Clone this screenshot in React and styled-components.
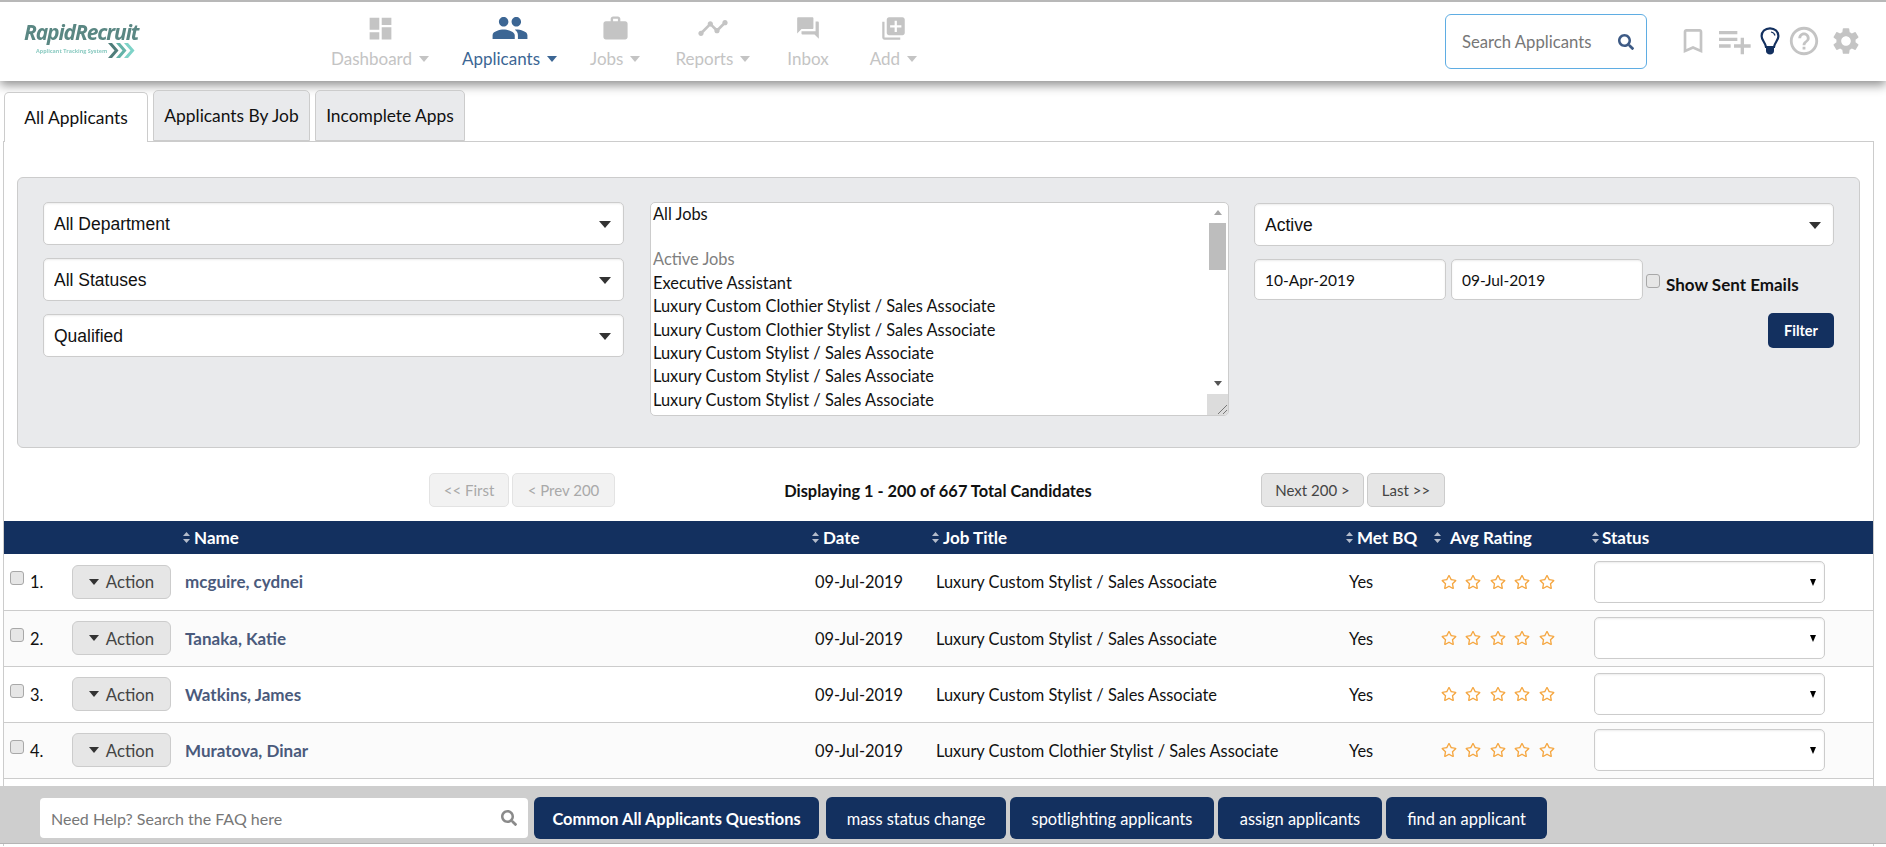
import styled, { createGlobalStyle } from 'styled-components';
import {
  MdDashboard, MdPeople, MdWork, MdTimeline, MdQuestionAnswer, MdLibraryAdd,
  MdBookmarkBorder, MdPlaylistAdd, MdHelpOutline, MdSettings,
} from 'react-icons/md';
import { FaSearch, FaRegStar } from 'react-icons/fa';

const navy = '#13305f';
const textFont = `Lato, "Noto Sans", sans-serif`;

const GlobalStyle = createGlobalStyle`
  html, body {
    margin: 0;
    height: 847px;
    overflow: hidden;
    background: #fff;
    font-family: ${textFont};
    font-size: 16.4px;
    color: #111;
  }
  * { box-sizing: border-box; }
`;

const TopBar = styled.header`
  height: 81px;
  border-top: 2px solid #b8b8b8;
  background: #fff;
  box-shadow: 0 4px 10px rgba(0, 0, 0, 0.45);
  display: flex;
  align-items: flex-start;
  position: relative;
`;

const Logo = styled.div`
  width: 331px;
  padding: 18px 0 0 24px;
  filter: blur(0.5px);
`;

const LogoName = styled.div`
  font: italic 700 21px/24px "Open Sans", sans-serif;
  letter-spacing: -1.1px;
  color: #5a8783;
`;

const LogoRow = styled.div`
  display: flex;
  align-items: center;
  margin: -2px 0 0 12px;
`;

const LogoSub = styled.span`
  font: 700 5.4px/10px "Open Sans", sans-serif;
  color: #8ccbc2;
  white-space: nowrap;
`;

const Nav = styled.nav`
  display: flex;
  gap: 33px;
  width: 1114px;
`;

const NavItem = styled.div`
  display: flex;
  flex-direction: column;
  align-items: center;
  margin-left: ${p => p.$shift || 0}px;
  color: ${p => (p.$active ? '#3c6694' : '#c4c4c4')};
  font-size: 17px;
`;

const NavIcon = styled.div`
  height: 38px;
  padding-top: 14px;
  display: flex;
  align-items: center;
  justify-content: center;
  font-size: ${p => p.$size}px;
`;

const NavLabel = styled.div`
  display: flex;
  align-items: center;
  gap: 7px;
  line-height: 20px;
  margin-top: 9px;
  white-space: nowrap;
`;

const Caret = styled.span`
  display: inline-block;
  width: 0;
  height: 0;
  border-left: 5px solid transparent;
  border-right: 5px solid transparent;
  border-top: 6px solid ${p => p.$color || 'currentColor'};
`;

const SearchBox = styled.div`
  width: 202px;
  height: 55px;
  margin-top: 12px;
  border: 1px solid #5fade3;
  border-radius: 6px;
  padding: 0 12px 0 16px;
  display: flex;
  align-items: center;
  justify-content: space-between;
  color: #777;
  font-size: 16.7px;
  svg { color: #3d5a85; font-size: 16px; }
`;

const ToolIcons = styled.div`
  display: flex;
  align-items: center;
  height: 30px;
  margin: 24px 0 0 30px;
  color: #c4c4c4;
`;

const ToolIcon = styled.span`
  display: flex;
  font-size: ${p => p.$size}px;
  margin-right: ${p => p.$gap || 0}px;
`;

const Tabs = styled.div`
  display: flex;
  align-items: flex-end;
  gap: 5px;
  height: 60px;
  padding-left: 4px;
  position: relative;
`;

const Tab = styled.div`
  width: ${p => p.$w}px;
  height: ${p => (p.$active ? 50 : 51)}px;
  border: 1px solid #ccc;
  border-bottom: ${p => (p.$active ? '0' : '1px solid #ccc')};
  border-radius: 5px 5px 0 0;
  background: ${p => (p.$active ? '#fff' : '#e9eaec')};
  font-size: 17.4px;
  white-space: nowrap;
  display: flex;
  align-items: center;
  justify-content: center;
  margin-bottom: ${p => (p.$active ? -1 : 0)}px;
  position: relative;
`;

const Content = styled.main`
  width: 1871px;
  height: 705px;
  margin-left: 3px;
  border-left: 1px solid #ccc;
  border-right: 1px solid #ccc;
  border-top: 1px solid #ccc;
  padding-top: 35px;
`;

const FilterPanel = styled.section`
  height: 271px;
  margin: 0 13px;
  border: 1px solid #ccc;
  border-radius: 6px;
  background: #e9eaec;
  padding: 24px 25px 0 25px;
  display: grid;
  grid-template-columns: 581px 580px 580px;
  column-gap: 25px;
`;

const Stack = styled.div`
  display: flex;
  flex-direction: column;
  gap: 13px;
  margin-top: ${p => p.$offset || 0}px;
`;

const SelectWrap = styled.div`
  position: relative;
  width: ${p => (p.$small ? '231px' : 'auto')};
  &::after {
    content: '';
    position: absolute;
    right: ${p => (p.$small ? 9 : 13)}px;
    top: 50%;
    margin-top: -3px;
    border-left: ${p => (p.$small ? 3 : 6)}px solid transparent;
    border-right: ${p => (p.$small ? 3 : 6)}px solid transparent;
    border-top: 7px solid ${p => (p.$small ? '#000' : '#333')};
    pointer-events: none;
  }
`;

const Select = styled.select`
  appearance: none;
  display: block;
  width: 100%;
  height: ${p => (p.$small ? 42 : 43)}px;
  padding: 0 10px;
  background: #fff;
  border: 1px solid #ccc;
  border-radius: 5px;
  box-shadow: inset 0 1px 2px rgba(0, 0, 0, 0.08);
  font: 17.5px "Liberation Sans", Arial, sans-serif;
  color: #111;
`;

const ListBox = styled.div`
  height: 214px;
  margin-left: 1px;
  border: 1px solid #ccc;
  border-radius: 5px;
  background: #fff;
  display: flex;
  overflow: hidden;
`;

const ListItems = styled.div`
  flex: 1;
  margin-top: -1px;
  padding-left: 2px;
`;

const ListItem = styled.div`
  height: ${p => (p.$blank ? 22 : 23.4)}px;
  line-height: 23px;
  white-space: nowrap;
  color: ${p => (p.$group ? '#808080' : '#111')};
`;

const ScrollBar = styled.div`
  width: 21px;
  display: flex;
  flex-direction: column;
  align-items: center;
  padding-top: 7px;
`;

const ScrollArrow = styled.span`
  width: 0;
  height: 0;
  border-left: 4px solid transparent;
  border-right: 4px solid transparent;
  border-${p => (p.$up ? 'bottom' : 'top')}: 5px solid ${p => (p.$up ? '#a6a6a6' : '#555')};
`;

const ScrollThumb = styled.div`
  width: 17px;
  height: 47px;
  margin-top: 8px;
  background: #bdbdbd;
`;

const ScrollGap = styled.div`
  flex: 1;
`;

const ResizeCorner = styled.div`
  width: 21px;
  height: 21px;
  margin-top: 8px;
  background: #dcdcdc;
  display: flex;
  align-items: flex-end;
  justify-content: flex-end;
`;

const DateRow = styled.div`
  display: flex;
  align-items: flex-start;
`;

const DateInput = styled.input`
  width: 192px;
  height: 41px;
  margin-right: 5px;
  padding: 0 10px;
  border: 1px solid #ccc;
  border-radius: 5px;
  background: #fff;
  box-shadow: inset 0 1px 2px rgba(0, 0, 0, 0.08);
  font: 15.5px ${textFont};
  color: #111;
`;

const Check = styled.input.attrs({ type: 'checkbox', readOnly: true })`
  appearance: none;
  width: 14px;
  height: 14px;
  margin: 0;
  flex: none;
  border: 1px solid #a8a8a8;
  border-radius: 3px;
  background: #e6e6e6;
`;

const SentLabel = styled.label`
  display: flex;
  align-items: flex-start;
  gap: 6px;
  margin: 15px 0 0 -2px;
  font-weight: 700;
  font-size: 17px;
  line-height: 21px;
  white-space: nowrap;
`;

const FilterButton = styled.button`
  align-self: flex-end;
  width: 66px;
  height: 35px;
  background: ${navy};
  color: #fff;
  border: 0;
  border-radius: 5px;
  font: 700 14.5px ${textFont};
`;

const Pager = styled.div`
  display: flex;
  align-items: center;
  height: 34px;
  margin: 25px 0 14px 425px;
`;

const PagerGroup = styled.div`
  display: flex;
  gap: 3px;
`;

const PagerText = styled.div`
  width: 646px;
  text-align: center;
  font-weight: 700;
`;

const PagerButton = styled.div`
  width: ${p => p.$w}px;
  height: 34px;
  border: 1px solid ${p => (p.$off ? '#e3e3e3' : '#ccc')};
  border-radius: 5px;
  background: ${p => (p.$off ? '#f2f2f2' : '#e6e6e6')};
  color: ${p => (p.$off ? '#a9a9a9' : '#444')};
  font-size: 15px;
  display: flex;
  align-items: center;
  justify-content: center;
`;

const Table = styled.table`
  width: 1869px;
  border-collapse: collapse;
  table-layout: fixed;
`;

const HeadRow = styled.tr`
  height: 33px;
  background: ${navy};
  color: #fff;
`;

const Th = styled.th`
  padding: 0;
  text-align: left;
  font-size: 17px;
  font-weight: 700;
`;

const HeadInner = styled.div`
  display: flex;
  align-items: center;
  gap: ${p => p.$gap || 4}px;
  white-space: nowrap;
`;

const Row = styled.tr`
  height: 56px;
  border-bottom: 1px solid #ccc;
  background: ${p => (p.$alt ? '#fbfbfb' : '#fff')};
`;

const Td = styled.td`
  padding: 0 0 0 ${p => p.$pad || 3}px;
  white-space: nowrap;
`;

const RowStart = styled.div`
  display: flex;
  align-items: center;
  padding-left: 3px;
`;

const RowCheck = styled(Check)`
  margin-bottom: 7px;
`;

const RowNumber = styled.span`
  width: 48px;
  padding-left: 6px;
`;

const ActionButton = styled.div`
  width: 99px;
  height: 34px;
  border: 1px solid #ccc;
  border-radius: 6px;
  background: #e6e6e6;
  color: #444;
  font-size: 16.8px;
  display: flex;
  align-items: center;
  justify-content: center;
  gap: 7px;
`;

const NameLink = styled.span`
  font-weight: 700;
  font-size: 17px;
  color: #4a5a7c;
`;

const Stars = styled.div`
  display: flex;
  gap: 8.4px;
  font-size: 16px;
  color: #f5a742;
`;

const HelpBar = styled.footer`
  position: fixed;
  left: 0;
  right: 0;
  bottom: 3px;
  height: 58px;
  background: #cecece;
  border-bottom: 1px solid #b5b5b5;
  padding: 11px 0 0 40px;
  display: flex;
  gap: 6px;
`;

const HelpSearch = styled.div`
  width: 488px;
  height: 40px;
  margin-top: 1px;
  background: #fff;
  border-radius: 4px;
  padding: 0 11px;
  display: flex;
  align-items: center;
  justify-content: space-between;
  color: #777;
  font-size: 16px;
  svg { color: #8a8a8a; font-size: 16px; }
`;

const HelpButtons = styled.div`
  display: flex;
  gap: 4px;
`;

const HelpButton = styled.div`
  width: ${p => p.$w}px;
  height: 42px;
  background: ${navy};
  border-radius: 6px;
  color: #fff;
  font-size: 16.4px;
  font-weight: ${p => (p.$bold ? 700 : 400)};
  white-space: nowrap;
  display: flex;
  align-items: center;
  justify-content: center;
  &:first-child { margin-right: 3px; }
`;

const navItems = [
  { label: 'Dashboard', Icon: MdDashboard, size: 29, caret: true },
  { label: 'Applicants', Icon: MdPeople, size: 38, caret: true, active: true },
  { label: 'Jobs', Icon: MdWork, size: 29, caret: true },
  { label: 'Reports', Icon: MdTimeline, size: 32, caret: true, shift: 2 },
  { label: 'Inbox', Icon: MdQuestionAnswer, size: 26, shift: 4 },
  { label: 'Add', Icon: MdLibraryAdd, size: 27, caret: true, shift: 8 },
];

const jobOptions = [
  { text: 'All Jobs' },
  { text: '\u00a0', blank: true },
  { text: 'Active Jobs', group: true },
  { text: 'Executive Assistant' },
  { text: 'Luxury Custom Clothier Stylist / Sales Associate' },
  { text: 'Luxury Custom Clothier Stylist / Sales Associate' },
  { text: 'Luxury Custom Stylist / Sales Associate' },
  { text: 'Luxury Custom Stylist / Sales Associate' },
  { text: 'Luxury Custom Stylist / Sales Associate' },
];

const columns = [179, 629, 120, 414, 88, 158, 281];

const headers = [
  { label: '' },
  { label: 'Name' },
  { label: 'Date' },
  { label: 'Job Title' },
  { label: 'Met BQ' },
  { label: 'Avg Rating', gap: 9 },
  { label: 'Status', gap: 3 },
];

const applicants = [
  { name: 'mcguire, cydnei', job: 'Luxury Custom Stylist / Sales Associate' },
  { name: 'Tanaka, Katie', job: 'Luxury Custom Stylist / Sales Associate' },
  { name: 'Watkins, James', job: 'Luxury Custom Stylist / Sales Associate' },
  { name: 'Muratova, Dinar', job: 'Luxury Custom Clothier Stylist / Sales Associate' },
];

const helpLinks = [
  { text: 'Common All Applicants Questions', w: 285, bold: true },
  { text: 'mass status change', w: 180 },
  { text: 'spotlighting applicants', w: 204 },
  { text: 'assign applicants', w: 164 },
  { text: 'find an applicant', w: 161 },
];

function SortIcon() {
  return (
    <svg width="7" height="11" viewBox="0 0 7 11">
      <path d="M3.5 0 7 4H0z M3.5 11 0 7h7z" fill="#b4bccb" />
    </svg>
  );
}

function Bulb() {
  return (
    <svg width="20" height="28" viewBox="0 0 20 28">
      <path d="M10 1.3C5 1.3 1.6 4.8 1.6 9c0 4.5 3.6 6 4.4 11h8c.8-5 4.4-6.5 4.4-11 0-4.2-3.4-7.7-8.4-7.7z" fill="none" stroke={navy} strokeWidth="2.2" />
      <path d="M6 19.5h8V24c0 2-1.8 3.5-4 3.5S6 26 6 24z" fill={navy} />
      <path d="M11 5c2 .3 3.5 1.5 4 3.5" fill="none" stroke={navy} strokeWidth="1.2" />
    </svg>
  );
}

function Chevrons() {
  return (
    <svg width="28" height="17" viewBox="0 0 28 17">
      <path d="M1 1l6.5 7.5L1 16h4l6.5-7.5L5 1z" fill="#4f7d7a" />
      <path d="M9 1l6.5 7.5L9 16h4l6.5-7.5L13 1z" fill="#64b3a8" />
      <path d="M17 1l6.5 7.5L17 16h4l6.5-7.5L21 1z" fill="#7ed3c8" />
    </svg>
  );
}

function Header() {
  return (
    <TopBar>
      <Logo>
        <LogoName>RapidRecruit</LogoName>
        <LogoRow>
          <LogoSub>Applicant Tracking System</LogoSub>
          <Chevrons />
        </LogoRow>
      </Logo>
      <Nav>
        {navItems.map(({ label, Icon, size, caret, active, shift }) => (
          <NavItem key={label} $active={active} $shift={shift}>
            <NavIcon $size={size}><Icon /></NavIcon>
            <NavLabel>
              {label}
              {caret && <Caret />}
            </NavLabel>
          </NavItem>
        ))}
      </Nav>
      <SearchBox>
        Search Applicants
        <FaSearch />
      </SearchBox>
      <ToolIcons>
        <ToolIcon $size={32} $gap={5}><MdBookmarkBorder /></ToolIcon>
        <ToolIcon $size={40} $gap={6}><MdPlaylistAdd /></ToolIcon>
        <ToolIcon $size={28} $gap={7}><Bulb /></ToolIcon>
        <ToolIcon $size={34} $gap={9}><MdHelpOutline /></ToolIcon>
        <ToolIcon $size={32}><MdSettings /></ToolIcon>
      </ToolIcons>
    </TopBar>
  );
}

function Filters() {
  return (
    <FilterPanel>
      <Stack>
        {['All Department', 'All Statuses', 'Qualified'].map(value => (
          <SelectWrap key={value}>
            <Select defaultValue={value}><option>{value}</option></Select>
          </SelectWrap>
        ))}
      </Stack>
      <ListBox>
        <ListItems>
          {jobOptions.map((option, i) => (
            <ListItem key={i} $group={option.group} $blank={option.blank}>{option.text}</ListItem>
          ))}
        </ListItems>
        <ScrollBar>
          <ScrollArrow $up />
          <ScrollThumb />
          <ScrollGap />
          <ScrollArrow />
          <ResizeCorner>
            <svg width="11" height="11" viewBox="0 0 11 11">
              <path d="M1 10l9-9M6 10l4-4" stroke="#777" strokeWidth="1" />
            </svg>
          </ResizeCorner>
        </ScrollBar>
      </ListBox>
      <Stack $offset={1}>
        <SelectWrap>
          <Select defaultValue="Active"><option>Active</option></Select>
        </SelectWrap>
        <DateRow>
          <DateInput defaultValue="10-Apr-2019" />
          <DateInput defaultValue="09-Jul-2019" />
          <SentLabel>
            <Check />
            <span>Show Sent Emails</span>
          </SentLabel>
        </DateRow>
        <FilterButton>Filter</FilterButton>
      </Stack>
    </FilterPanel>
  );
}

function ApplicantTable() {
  return (
    <Table>
      <colgroup>
        {columns.map((w, i) => <col key={i} width={w} />)}
      </colgroup>
      <thead>
        <HeadRow>
          {headers.map(h => (
            <Th key={h.label}>
              {h.label && (
                <HeadInner $gap={h.gap}>
                  <SortIcon />
                  {h.label}
                </HeadInner>
              )}
            </Th>
          ))}
        </HeadRow>
      </thead>
      <tbody>
        {applicants.map((a, i) => (
          <Row key={a.name} $alt={i % 2 === 1}>
            <Td>
              <RowStart>
                <RowCheck />
                <RowNumber>{i + 1}.</RowNumber>
                <ActionButton><Caret $color="#333" />Action</ActionButton>
              </RowStart>
            </Td>
            <Td $pad={2}><NameLink>{a.name}</NameLink></Td>
            <Td>09-Jul-2019</Td>
            <Td $pad={4}>{a.job}</Td>
            <Td>Yes</Td>
            <Td $pad={7}>
              <Stars>
                {[1, 2, 3, 4, 5].map(n => <FaRegStar key={n} />)}
              </Stars>
            </Td>
            <Td $pad={2}>
              <SelectWrap $small>
                <Select $small defaultValue="" aria-label="Status"><option value="" /></Select>
              </SelectWrap>
            </Td>
          </Row>
        ))}
      </tbody>
    </Table>
  );
}

export default function App() {
  return (
    <>
      <GlobalStyle />
      <Header />
      <Tabs>
        <Tab $w={144} $active>All Applicants</Tab>
        <Tab $w={157}>Applicants By Job</Tab>
        <Tab $w={150}>Incomplete Apps</Tab>
      </Tabs>
      <Content>
        <Filters />
        <Pager>
          <PagerGroup>
            <PagerButton $w={80} $off>&lt;&lt; First</PagerButton>
            <PagerButton $w={103} $off>&lt; Prev 200</PagerButton>
          </PagerGroup>
          <PagerText>Displaying 1 - 200 of 667 Total Candidates</PagerText>
          <PagerGroup>
            <PagerButton $w={103}>Next 200 &gt;</PagerButton>
            <PagerButton $w={78}>Last &gt;&gt;</PagerButton>
          </PagerGroup>
        </Pager>
        <ApplicantTable />
      </Content>
      <HelpBar>
        <HelpSearch>
          Need Help? Search the FAQ here
          <FaSearch />
        </HelpSearch>
        <HelpButtons>
          {helpLinks.map(link => (
            <HelpButton key={link.text} $w={link.w} $bold={link.bold}>{link.text}</HelpButton>
          ))}
        </HelpButtons>
      </HelpBar>
    </>
  );
}
